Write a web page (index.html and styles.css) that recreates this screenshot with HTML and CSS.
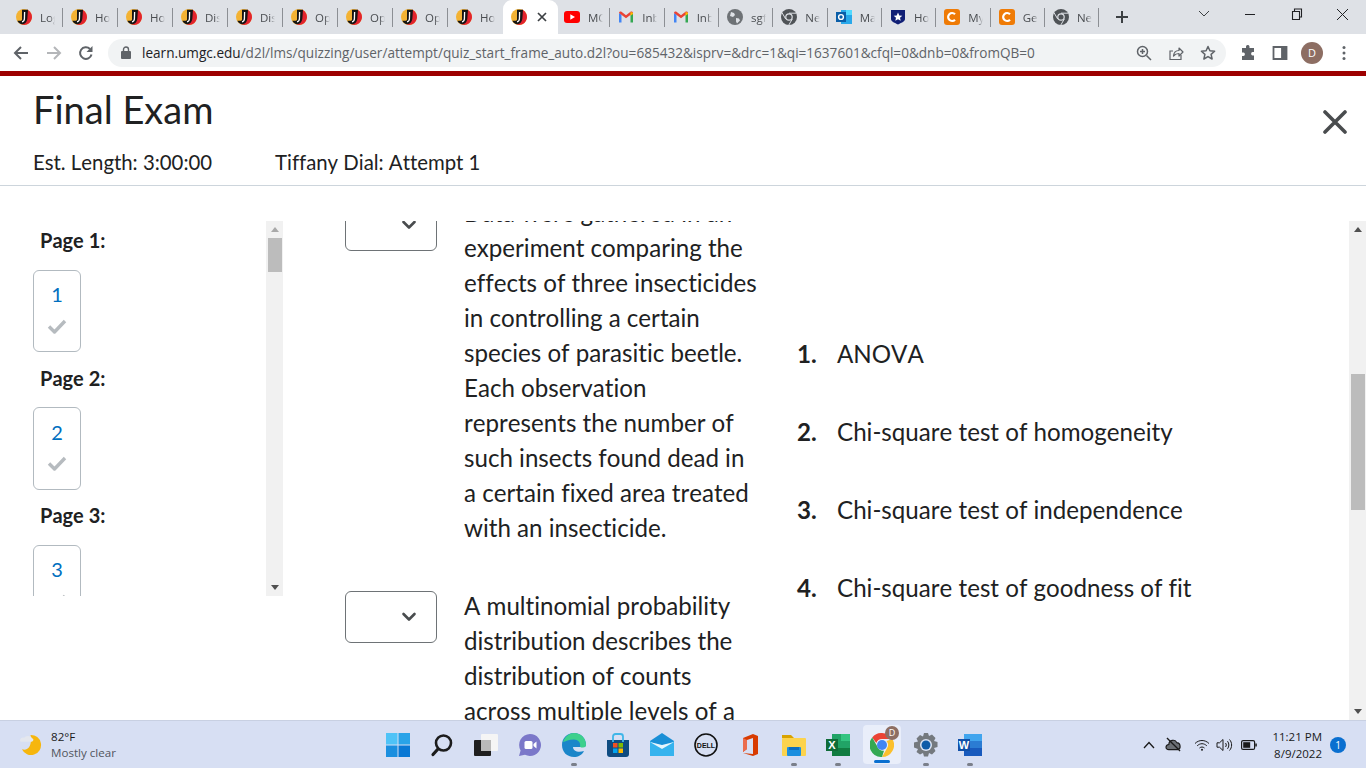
FILE: index.html
```html
<!DOCTYPE html>
<html lang="en">
<head>
<meta charset="utf-8">
<title>Final Exam</title>
<link rel="stylesheet" href="styles.css">
</head>
<body>
<svg class="defs" width="0" height="0" aria-hidden="true">
  <defs>
    <symbol id="umgc" viewBox="0 0 16 16">
      <circle cx="8" cy="8" r="8" fill="#f3b233"/>
      <path d="M11 .6A8 8 0 0 1 8 16L5 15l6-5z" fill="#e2232e"/>
      <path d="M6 .8h6L11.300 10c-.4 3-2.300 5.200-5 5.200-2 0-3.800-1.300-5-3.500H5c.6 0 1-.5 1-1.200z" fill="#151515"/>
      <path d="M8.600 3l-.2 7c-.1 1.500-.9 2.600-2.400 2.800" fill="none" stroke="#fff" stroke-width="1.300"/>
    </symbol>
    <symbol id="youtube" viewBox="0 0 16 16">
      <rect y="2" width="16" height="12" rx="3" fill="#f00"/>
      <path d="M6.300 5.200v5.600L11 8z" fill="#fff"/>
    </symbol>
    <symbol id="gmail" viewBox="0 0 16 16">
      <path d="M1 13.500V4l2.500 1.800v7.700z" fill="#4285f4"/>
      <path d="M12.500 13.500V5.800L15 4v9.500z" fill="#34a853"/>
      <path d="M1 4c0-1.500 1.500-2 2.500-1.200L8 6.200l4.500-3.400C13.500 2 15 2.500 15 4l-7 5.300z" fill="#ea4335"/>
      <path d="M12.500 2.800 15 4v1l-2.500 1.800z" fill="#fbbc04"/>
    </symbol>
    <symbol id="globe" viewBox="0 0 16 16">
      <circle cx="8" cy="8" r="8" fill="#6e7276"/>
      <path d="M4 3l3 1 1 2-2 2-3-1zM9 9l3 .5 1 2-3 3-1-2z" fill="#dee1e6"/>
    </symbol>
    <symbol id="chromegray" viewBox="0 0 16 16">
      <circle cx="8" cy="8" r="8" fill="#4f5357"/>
      <circle cx="8" cy="8" r="3.800" fill="#dee1e6"/>
      <circle cx="8" cy="8" r="2.600" fill="#4f5357"/>
      <path d="M8 4.200h7M4.700 10 1.200 4M11.300 10l-3.500 6" stroke="#dee1e6" stroke-width="1"/>
    </symbol>
    <symbol id="outlook" viewBox="0 0 16 16">
      <rect x="5" y="1" width="11" height="14" fill="#28a8ea"/>
      <rect x="10" y="1" width="6" height="5" fill="#50d9ff"/>
      <rect y="3" width="10" height="10" fill="#0a5ea8"/>
      <circle cx="5" cy="8" r="2.400" fill="none" stroke="#fff" stroke-width="1.400"/>
    </symbol>
    <symbol id="shield" viewBox="0 0 16 16">
      <path d="M1 1h14v9c0 2.500-4 4-7 5.500C5 14 1 12.500 1 10z" fill="#101f76"/>
      <path d="M8 3.500l1.300 2.900 3 .3-2.300 2 .7 3L8 10.200l-2.700 1.500.7-3-2.300-2 3-.3z" fill="#fff"/>
    </symbol>
    <symbol id="orangec" viewBox="0 0 16 16">
      <rect width="16" height="16" rx="3" fill="#ef7b06"/>
      <path d="M11 5.200A4 4 0 1 0 11 10.800" fill="none" stroke="#fff" stroke-width="2.200"/>
    </symbol>
    <symbol id="chevron" viewBox="0 0 16 10">
      <path d="M2.500 2 8 7.500 13.500 2" fill="none" stroke="#494c4e" stroke-width="2.600" stroke-linecap="round" stroke-linejoin="round"/>
    </symbol>
    <symbol id="check" viewBox="0 0 20 16">
      <path d="M2 8.500 7.500 14 18 3" fill="none" stroke="#b6bbbf" stroke-width="3.400" stroke-linejoin="round"/>
    </symbol>
  </defs>
</svg>

<header class="chrome">
  <div class="tabstrip">
    <div class="tabs">
      <div class="tab"><svg class="fav"><use href="#umgc"/></svg><span class="tab-title">Log</span></div>
      <div class="tab"><svg class="fav"><use href="#umgc"/></svg><span class="tab-title">Ho</span></div>
      <div class="tab"><svg class="fav"><use href="#umgc"/></svg><span class="tab-title">Ho</span></div>
      <div class="tab"><svg class="fav"><use href="#umgc"/></svg><span class="tab-title">Dis</span></div>
      <div class="tab"><svg class="fav"><use href="#umgc"/></svg><span class="tab-title">Dis</span></div>
      <div class="tab"><svg class="fav"><use href="#umgc"/></svg><span class="tab-title">Op</span></div>
      <div class="tab"><svg class="fav"><use href="#umgc"/></svg><span class="tab-title">Op</span></div>
      <div class="tab"><svg class="fav"><use href="#umgc"/></svg><span class="tab-title">Op</span></div>
      <div class="tab tab-before-active"><svg class="fav"><use href="#umgc"/></svg><span class="tab-title">Ho</span></div>
      <div class="tab tab-active"><svg class="fav"><use href="#umgc"/></svg>
        <svg class="tab-close" viewBox="0 0 10 10"><path d="M1 1l8 8M9 1 1 9" stroke="#3c4043" stroke-width="1.700"/></svg>
      </div>
    </div>
    <div class="tabs tabs-narrow">
      <div class="tab"><svg class="fav"><use href="#youtube"/></svg><span class="tab-title">MC</span></div>
      <div class="tab"><svg class="fav"><use href="#gmail"/></svg><span class="tab-title">Inb</span></div>
      <div class="tab"><svg class="fav"><use href="#gmail"/></svg><span class="tab-title">Inb</span></div>
      <div class="tab"><svg class="fav"><use href="#globe"/></svg><span class="tab-title">sgf</span></div>
      <div class="tab"><svg class="fav"><use href="#chromegray"/></svg><span class="tab-title">Ne</span></div>
      <div class="tab"><svg class="fav"><use href="#outlook"/></svg><span class="tab-title">Ma</span></div>
      <div class="tab"><svg class="fav"><use href="#shield"/></svg><span class="tab-title">Ho</span></div>
      <div class="tab"><svg class="fav"><use href="#orangec"/></svg><span class="tab-title">My</span></div>
      <div class="tab"><svg class="fav"><use href="#orangec"/></svg><span class="tab-title">Ge</span></div>
      <div class="tab"><svg class="fav"><use href="#chromegray"/></svg><span class="tab-title">Ne</span></div>
    </div>
    <svg class="newtab" viewBox="0 0 14 14"><path d="M7 1v12M1 7h12" stroke="#3c4043" stroke-width="2"/></svg>
    <div class="winctl">
      <svg class="winbtn" viewBox="0 0 46 20"><path d="M18 7l5 5 5-5" fill="none" stroke="#3c4043" stroke-width="1"/></svg>
      <svg class="winbtn" viewBox="0 0 46 20"><path d="M18 10.500h10" stroke="#202124" stroke-width="1"/></svg>
      <svg class="winbtn" viewBox="0 0 46 20"><path d="M19.500 7.500h7v8h-7zM21.500 7.500v-2.500h7v8h-2" fill="none" stroke="#202124" stroke-width="1.100"/></svg>
      <svg class="winbtn" viewBox="0 0 46 20"><path d="M18 5l11 11M29 5 18 16" stroke="#202124" stroke-width="1"/></svg>
    </div>
  </div>
  <div class="toolbar">
    <svg class="navicon nav-back" viewBox="0 0 16 16"><path d="M15 8H2M8 2 2 8l6 6" fill="none" stroke="#5f6368" stroke-width="2"/></svg>
    <svg class="navicon nav-forward" viewBox="0 0 16 16"><path d="M1 8h13M8 2l6 6-6 6" fill="none" stroke="#b4b6b9" stroke-width="2"/></svg>
    <svg class="navicon nav-reload" viewBox="0 0 16 16"><path d="M13.500 9.500A5.800 5.800 0 1 1 12 4" fill="none" stroke="#5f6368" stroke-width="2"/><path d="M14.500 1v6h-6z" fill="#5f6368"/></svg>
    <div class="omnibox">
      <svg class="lock" viewBox="0 0 10 13"><path d="M2.500 5.500V3.500a2.500 2.500 0 0 1 5 0v2" fill="none" stroke="#5f6368" stroke-width="1.400"/><rect y="5" width="10" height="8" rx="1" fill="#5f6368"/></svg>
      <span class="url"><span class="url-host">learn.umgc.edu</span>/d2l/lms/quizzing/user/attempt/quiz_start_frame_auto.d2l?ou=685432&amp;isprv=&amp;drc=1&amp;qi=1637601&amp;cfql=0&amp;dnb=0&amp;fromQB=0</span>
      <div class="omni-icons">
        <svg class="omni-icon" viewBox="0 0 16 16"><circle cx="6.500" cy="6.500" r="5" fill="none" stroke="#5f6368" stroke-width="1.500"/><path d="M10.500 10.500 15 15M4 6.500h5M6.500 4v5" stroke="#5f6368" stroke-width="1.500"/></svg>
        <svg class="omni-icon" viewBox="0 0 16 16"><path d="M13 10v4.500H2V6h3" fill="none" stroke="#5f6368" stroke-width="1.200"/><path d="M5.500 11c.3-3.500 2.500-5.500 5.500-5.500V3l4 4-4 4V8.500c-2.500 0-4 .8-5.500 2.500z" fill="none" stroke="#5f6368" stroke-width="1.200" stroke-linejoin="round"/></svg>
        <svg class="omni-icon" viewBox="0 0 16 16"><path d="M8 1.500l1.900 4.300 4.700.5-3.500 3.100 1 4.600L8 11.600l-4.100 2.400 1-4.600L1.400 6.300l4.700-.5z" fill="none" stroke="#5f6368" stroke-width="1.500" stroke-linejoin="round"/></svg>
      </div>
    </div>
    <div class="tool-icons">
      <svg class="tool-icon" viewBox="0 0 16 16"><path d="M6 1.500a1.800 1.800 0 0 1 3.500 0V3H14v4h-1.500a1.800 1.800 0 0 0 0 3.500H14v4.500H2v-4h1.500a1.800 1.800 0 0 0 0-3.500H2V3h4z" fill="#5f6368"/></svg>
      <svg class="tool-icon" viewBox="0 0 16 16"><path d="M1.500 2h13v12h-13zM10 2v12" fill="none" stroke="#5f6368" stroke-width="1.800"/><rect x="10" y="2" width="4.500" height="12" fill="#5f6368"/></svg>
      <div class="avatar">D</div>
      <svg class="tool-icon" viewBox="0 0 16 16"><circle cx="8" cy="2.500" r="1.500" fill="#5f6368"/><circle cx="8" cy="8" r="1.500" fill="#5f6368"/><circle cx="8" cy="13.500" r="1.500" fill="#5f6368"/></svg>
    </div>
  </div>
  <div class="brandline"></div>
</header>

<main class="dialog">
  <div class="dialog-head">
    <div class="title-row">
      <h1 class="title">Final Exam</h1>
      <svg class="dialog-close" viewBox="0 0 24 24"><path d="M2 2l20 20M22 2 2 22" stroke="#494c4e" stroke-width="3.600" stroke-linecap="round"/></svg>
    </div>
    <div class="meta"><span class="meta-length">Est. Length: 3:00:00</span><span>Tiffany Dial: Attempt 1</span></div>
  </div>

  <div class="dialog-body">
    <aside class="pages">
      <div class="pages-list">
        <h2 class="page-label">Page 1:</h2>
        <div class="page-tile"><span class="page-num">1</span><svg class="page-check"><use href="#check"/></svg></div>
        <h2 class="page-label">Page 2:</h2>
        <div class="page-tile"><span class="page-num">2</span><svg class="page-check"><use href="#check"/></svg></div>
        <h2 class="page-label">Page 3:</h2>
        <div class="page-tile"><span class="page-num">3</span><svg class="page-check"><use href="#check"/></svg></div>
      </div>
      <div class="scrollbar scrollbar-small">
        <svg class="sb-arrow" viewBox="0 0 8 5"><path d="M4 0l4 5H0z" fill="#a9a9a9"/></svg>
        <div class="sb-track"><div class="sb-thumb sb-thumb-small"></div></div>
        <svg class="sb-arrow" viewBox="0 0 8 5"><path d="M0 0h8L4 5z" fill="#505050"/></svg>
      </div>
    </aside>

    <section class="questions">
      <div class="match">
        <div class="match-left">
          <div class="match-row">
            <div class="select"><svg class="select-chev"><use href="#chevron"/></svg></div>
            <p class="prompt">Data were gathered in an experiment comparing the effects of three insecticides in controlling a certain species of parasitic beetle. Each observation represents the number of such insects found dead in a certain fixed area treated with an insecticide.</p>
          </div>
          <div class="match-row">
            <div class="select"><svg class="select-chev"><use href="#chevron"/></svg></div>
            <p class="prompt">A multinomial probability distribution describes the distribution of counts across multiple levels of a</p>
          </div>
        </div>
        <ol class="answers">
          <li class="answer"><span class="answer-num">1.</span>ANOVA</li>
          <li class="answer"><span class="answer-num">2.</span>Chi-square test of homogeneity</li>
          <li class="answer"><span class="answer-num">3.</span>Chi-square test of independence</li>
          <li class="answer"><span class="answer-num">4.</span>Chi-square test of goodness of fit</li>
        </ol>
      </div>
      <div class="scrollbar scrollbar-main">
        <svg class="sb-arrow" viewBox="0 0 8 5"><path d="M4 0l4 5H0z" fill="#505050"/></svg>
        <div class="sb-track"><div class="sb-thumb sb-thumb-main"></div></div>
        <svg class="sb-arrow" viewBox="0 0 8 5"><path d="M0 0h8L4 5z" fill="#505050"/></svg>
      </div>
    </section>
  </div>
</main>

<footer class="taskbar">
  <div class="weather">
    <svg class="weather-icon" viewBox="0 0 24 24">
      <path d="M11 2a10.500 10.500 0 1 1-9 15c6 2 11-3 9-15z" fill="#f6b60d"/>
      <path d="M0 8c0-3 3-4 4.500-3 1-2.500 7-3 8 .5 2 0 2 3.500-.5 3.500H2C.5 9 0 8.500 0 8z" fill="#e4e7ee"/>
    </svg>
    <div class="weather-text"><span class="temp">82°F</span><span class="cond">Mostly clear</span></div>
  </div>
  <div class="task-icons">
    <div class="task"><svg class="task-svg" viewBox="0 0 24 24"><rect width="11.500" height="11.500" fill="#4fc3f7"/><rect x="12.500" width="11.500" height="11.500" fill="#29a3e8"/><rect y="12.500" width="11.500" height="11.500" fill="#1b8fdf"/><rect x="12.500" y="12.500" width="11.500" height="11.500" fill="#0a78d4"/></svg></div>
    <div class="task"><svg class="task-svg" viewBox="0 0 24 24"><circle cx="13.500" cy="10" r="7.500" fill="none" stroke="#1c1c1c" stroke-width="2.600"/><path d="M8 16l-5 5.500" stroke="#1c1c1c" stroke-width="3.200" stroke-linecap="round"/></svg></div>
    <div class="task"><svg class="task-svg" viewBox="0 0 24 24"><rect x="7" y="1" width="17" height="17" rx="1" fill="#f5f5f5"/><rect x="0" y="7" width="17" height="16" rx="1" fill="#1f1f1f"/><rect x="7" y="7" width="10" height="11" fill="#b9b9b9"/></svg></div>
    <div class="task"><svg class="task-svg" viewBox="0 0 24 24"><path d="M12 1a11 11 0 1 1-5 20.800L1 23l1.600-5.500A11 11 0 0 1 12 1z" fill="#7b78c9"/><rect x="6.500" y="8" width="8" height="8" rx="1.500" fill="#fff"/><path d="M15.500 11l3-2.500v7l-3-2.500z" fill="#fff"/></svg></div>
    <div class="task task-running"><svg class="task-svg" viewBox="0 0 24 24"><path d="M12 0C19 0 24 5 24 12c0 1-1 2-3 2H11c0 4 5 6 11 4-2 4-6 6-10 6C5 24 0 19 0 12S5 0 12 0z" fill="#1b86c9"/><path d="M1 9C3 3 8 0 12 0c7 0 12 5 12 12 0 1.500-1 2.500-3 2.500-1 0-3 0-3-1 1-4-2-7-6-7-5 0-9 2-11 2.500z" fill="#3dd08c"/></svg></div>
    <div class="task"><svg class="task-svg" viewBox="0 0 24 24"><path d="M1 7h22v14a3 3 0 0 1-3 3H4a3 3 0 0 1-3-3z" fill="#0f4c81"/><path d="M7 9V3.500C7 2 8 1 9.500 1h5C16 1 17 2 17 3.500V9" fill="none" stroke="#3fb6e8" stroke-width="1.800"/><rect x="7" y="10" width="4.500" height="4.500" fill="#f25022"/><rect x="12.500" y="10" width="4.500" height="4.500" fill="#7fba00"/><rect x="7" y="15.500" width="4.500" height="4.500" fill="#00a4ef"/><rect x="12.500" y="15.500" width="4.500" height="4.500" fill="#ffb900"/></svg></div>
    <div class="task"><svg class="task-svg" viewBox="0 0 24 24"><path d="M0 8 12 0l12 8v15H0z" fill="#1a8fd6"/><path d="M0 8l12 8 12-8v15H0z" fill="#35b3ee"/><path d="M0 9l12 7 12-7-12 3z" fill="#e8f6fd"/></svg></div>
    <div class="task"><svg class="task-svg" viewBox="0 0 24 24"><circle cx="12" cy="12" r="11" fill="none" stroke="#111" stroke-width="1.600"/><text class="dell-text" x="12" y="14.500" text-anchor="middle">DELL</text></svg></div>
    <div class="task"><svg class="task-svg" viewBox="0 0 24 24"><path d="M5 5 15 1l5 2v18l-5 2-10-3 10 1V5L9 7v9l-4 3z" fill="#d83b01"/><path d="M5 5 9 7v9l-4 3z" fill="#eb6c4d"/></svg></div>
    <div class="task task-running"><svg class="task-svg" viewBox="0 0 24 24"><path d="M0 2h9l3 3h-12z" fill="#d9a300"/><rect y="5" width="24" height="18" rx="1" fill="#fcd34d"/><rect x="5" y="14" width="14" height="9" rx="1" fill="#1b8fdf"/><rect x="7" y="14" width="10" height="3" fill="#0c6fbf"/></svg></div>
    <div class="task task-running"><svg class="task-svg" viewBox="0 0 24 24"><rect x="6" y="1" width="18" height="22" fill="#21a366"/><rect x="15" y="1" width="9" height="7" fill="#33c481"/><rect x="6" y="15" width="18" height="8" fill="#107c41"/><rect y="6" width="12" height="12" fill="#0f6c38"/><text class="office-letter" x="6" y="16" text-anchor="middle">X</text></svg></div>
    <div class="task task-active">
      <svg class="task-svg" viewBox="0 0 24 24"><path d="M12 0a12 12 0 0 1 10.400 6H12a6 6 0 0 0-5.700 4L2.200 4.500A12 12 0 0 1 12 0z" fill="#ea4335"/><path d="M22.400 6A12 12 0 0 1 12 24l5-8.800A6 6 0 0 0 16.500 8z" fill="#fbc02d"/><path d="M12 24A12 12 0 0 1 2.200 4.500l5 8.700A6 6 0 0 0 14 17.700z" fill="#34a853"/><circle cx="12" cy="12" r="5" fill="#4285f4"/></svg>
      <span class="task-badge">D</span>
    </div>
    <div class="task task-running"><svg class="task-svg" viewBox="0 0 24 24"><path d="M10 0h4l1 3 3-1.500 3.500 3.500-1.500 3 3.500 1v5l-3.500 1 1.500 3-3.500 3.500-3-1.500-1 3.500h-4l-1-3.500-3 1.500L2.500 19l1.500-3L0 14.500v-5l4-1-1.500-3L6 2l3 1.500z" fill="#74797e"/><circle cx="12" cy="12" r="6" fill="#dce4f4"/><circle cx="12" cy="12" r="4.500" fill="#0f5ca8"/></svg></div>
    <div class="task task-running"><svg class="task-svg" viewBox="0 0 24 24"><rect x="6" y="1" width="18" height="22" fill="#2b7cd3"/><rect x="6" y="1" width="18" height="7" fill="#41a5ee"/><rect x="6" y="15" width="18" height="8" fill="#185abd"/><rect y="6" width="12" height="12" fill="#1150a8"/><text class="office-letter" x="6" y="16" text-anchor="middle">W</text></svg></div>
  </div>
  <div class="tray">
    <svg class="tray-up" viewBox="0 0 12 8"><path d="M1 7l5-5.500L11 7" fill="none" stroke="#1a1a1a" stroke-width="1.300"/></svg>
    <svg class="tray-cloud" viewBox="0 0 18 16"><path d="M4 13.500c-4 0-4-5 0-5.500 0-5 7-6 8.500-2 4 0 5 6.500 1 7.500z" fill="#6b6f75" stroke="#1a1a1a" stroke-width="1.200"/><path d="M2 1l14 14" stroke="#1a1a1a" stroke-width="1.400"/></svg>
    <svg class="tray-wifi" viewBox="0 0 16 12"><path d="M1 4.500c4-4 10-4 14 0M3.200 6.800c3-2.800 6.600-2.800 9.600 0M5.500 9c1.500-1.300 3.500-1.300 5 0" fill="none" stroke="#1a1a1a" stroke-width="1"/><circle cx="8" cy="10.800" r="1" fill="#1a1a1a"/></svg>
    <svg class="tray-sound" viewBox="0 0 17 14"><path d="M1 4.800h2.500L7 1.500v11L3.500 9.200H1z" fill="none" stroke="#1a1a1a" stroke-width="1"/><path d="M9.500 5c1 1.200 1 2.800 0 4M11.500 3.200c1.800 2 1.800 5.600 0 7.600M13.500 1.500c2.800 3 2.800 8 0 11" fill="none" stroke="#1a1a1a" stroke-width="1"/></svg>
    <svg class="tray-batt" viewBox="0 0 16 10"><rect x=".6" y=".6" width="13" height="8.800" rx="1.500" fill="none" stroke="#1a1a1a" stroke-width="1.200"/><rect x="2.200" y="2.200" width="7" height="5.600" fill="#1a1a1a"/><rect x="14.300" y="3.500" width="1.500" height="3" fill="#1a1a1a"/></svg>
    <div class="clock"><span>11:21 PM</span><span>8/9/2022</span></div>
    <span class="notif">1</span>
  </div>
</footer>
</body>
</html>
```

FILE: styles.css
```css
* { box-sizing: border-box; }
html, body { margin: 0; padding: 0; }
body {
  width: 1366px;
  height: 768px;
  overflow: hidden;
  display: flex;
  flex-direction: column;
  background: #fff;
  color: #202122;
  font-family: "Lato", sans-serif;
  font-variant-ligatures: none;
  font-kerning: none;
}
.defs { position: absolute; }

/* Browser chrome */
.chrome { flex: none; }
.tabstrip {
  height: 34px;
  background: #dee1e6;
  display: flex;
  align-items: stretch;
  padding-left: 8px;
  position: relative;
}
.tabs { display: flex; }
.tabs-narrow { margin-left: -2px; }
.tab {
  width: 55px;
  position: relative;
  display: flex;
  align-items: center;
  padding-left: 8px;
  gap: 8px;
}
.tabs-narrow .tab { width: 54.33px; }
.tab::after {
  content: "";
  position: absolute;
  right: 0;
  top: 8px;
  height: 19px;
  width: 1px;
  background: #8c8f94;
}
.tab-before-active::after, .tab-active::after { display: none; }
.tab-active {
  background: #fff;
  border-radius: 9px 9px 0 0;
  gap: 10px;
  padding-left: 8px;
}
.fav { width: 16px; height: 16px; flex: none; }
.tab-title {
  width: 15px;
  overflow: hidden;
  white-space: nowrap;
  font: 11.500px "Open Sans", sans-serif;
  color: #4a4d51;
  -webkit-mask-image: linear-gradient(to right, #000 65%, transparent);
  mask-image: linear-gradient(to right, #000 65%, transparent);
}
.tab-close { width: 10px; height: 10px; flex: none; }
.newtab { width: 14px; height: 14px; margin: 10px 0 0 16px; flex: none; }
.winctl { display: flex; margin-left: 52px; height: 20px; margin-top: 4px; }
.winbtn { width: 46px; height: 20px; flex: none; }

.toolbar {
  height: 37px;
  background: #fff;
  display: flex;
  align-items: center;
  padding-left: 13px;
}
.navicon { width: 16px; height: 16px; flex: none; }
.nav-forward { margin-left: 17px; }
.nav-reload { margin-left: 16px; }
.omnibox {
  width: 1118px;
  height: 28px;
  margin-left: 14px;
  background: #f1f3f4;
  border-radius: 14px;
  display: flex;
  align-items: center;
  padding-left: 13px;
}
.lock { width: 10px; height: 13px; flex: none; }
.url {
  margin-left: 11px;
  margin-bottom: 1px;
  font: 13.590px "Open Sans", sans-serif;
  color: #5f6368;
  white-space: nowrap;
}
.url-host { color: #202124; }
.omni-icons {
  margin-left: auto;
  display: flex;
  gap: 16px;
  padding-right: 10px;
}
.omni-icon { width: 16px; height: 16px; flex: none; }
.tool-icons {
  display: flex;
  align-items: center;
  margin-left: 14px;
  gap: 16px;
}
.tool-icon { width: 16px; height: 16px; flex: none; }
.avatar {
  width: 22px;
  height: 22px;
  border-radius: 50%;
  background: #8d6e63;
  color: #fff;
  font: 11px "Open Sans", sans-serif;
  display: flex;
  align-items: center;
  justify-content: center;
  margin: 0 -3px;
}
.brandline { height: 5px; background: #9d0000; }

/* Dialog */
.dialog {
  flex: 1;
  min-height: 0;
  display: flex;
  flex-direction: column;
  overflow: hidden;
}
.dialog-head {
  flex: none;
  height: 110px;
  border-bottom: 1px solid #cdd5dc;
  padding: 8px 0 0 33px;
}
.title-row { display: flex; justify-content: space-between; height: 50px; }
.title {
  margin: 0;
  font-size: 38px;
  line-height: 50px;
  font-weight: 400;
  color: #202122;
}
.dialog-close { width: 24px; height: 24px; margin: 26px 19px 0 0; flex: none; }
.meta {
  margin-top: 16px;
  font-size: 20.350px;
  line-height: 24px;
  color: #202122;
  display: flex;
}
.meta-length { width: 242px; }

.dialog-body {
  flex: 1;
  min-height: 0;
  display: flex;
  align-items: flex-start;
  padding-top: 35px;
}
.pages {
  flex: none;
  width: 283px;
  height: 375px;
  display: flex;
  overflow: hidden;
}
.pages-list { flex: 1; padding: 5px 0 0 33px; }
.page-label {
  margin: 0 0 15.500px 7px;
  font-size: 20px;
  line-height: 28px;
  font-weight: 700;
  color: #202122;
}
.page-tile {
  width: 48px;
  height: 82.500px;
  border: 1px solid #b2bac0;
  border-radius: 6px;
  display: flex;
  flex-direction: column;
  align-items: center;
  padding-top: 10.500px;
  margin-bottom: 11.500px;
  background: #fff;
}
.page-num { font-size: 20px; line-height: 27px; color: #006fbf; }
.page-check { width: 20px; height: 16px; margin-top: 9.500px; flex: none; }

.scrollbar {
  flex: none;
  width: 17px;
  background: #f1f1f1;
  display: flex;
  flex-direction: column;
  align-items: center;
}
.sb-arrow { width: 8px; height: 5px; margin: 6px 0; flex: none; }
.sb-track { flex: 1; width: 100%; padding: 0 1.500px 0 2px; }
.sb-thumb { background: #bcbcbc; width: 100%; }
.sb-thumb-small { height: 34px; }
.sb-thumb-main { height: 136px; margin-top: 136px; }

.questions {
  flex: 1;
  min-width: 0;
  height: 499px;
  display: flex;
  overflow: hidden;
}
.match {
  flex: 1;
  min-width: 0;
  display: flex;
  padding-left: 62px;
  overflow: hidden;
}
.match-left { width: 415px; flex: none; margin-top: -24.600px; }
.match-row { display: flex; gap: 27px; margin-bottom: 42.800px; }
.select {
  flex: none;
  width: 92px;
  height: 52px;
  margin-top: 2.100px;
  border: 1px solid #6e7376;
  border-radius: 6px;
  background: #fff;
  display: flex;
  align-items: center;
  justify-content: flex-end;
  padding-right: 19px;
}
.select-chev { width: 16px; height: 10px; }
.prompt {
  margin: 0;
  width: 296px;
  font-size: 24.150px;
  line-height: 34.950px;
  color: #202122;
}
.answers {
  list-style: none;
  margin: 111px 0 0 37px;
  padding: 0;
}
.answer {
  font-size: 24.150px;
  line-height: 44px;
  margin-bottom: 34px;
  white-space: nowrap;
  display: flex;
}
.answer-num { width: 40px; font-weight: 700; flex: none; }

/* Taskbar */
.taskbar {
  flex: none;
  height: 48px;
  background: #d7dff3;
  border-top: 1px solid #c8d0e2;
  display: flex;
  align-items: center;
}
.weather {
  width: 376px;
  flex: none;
  display: flex;
  align-items: center;
  padding-left: 20px;
  gap: 8px;
}
.weather-icon { width: 23px; height: 23px; flex: none; }
.weather-text {
  display: flex;
  flex-direction: column;
  font: 11.600px/16px "Open Sans", sans-serif;
}
.temp { color: #1a1a1a; }
.cond { color: #51555c; }
.task-icons { display: flex; align-items: center; height: 100%; }
.task {
  width: 44px;
  height: 100%;
  display: flex;
  align-items: center;
  justify-content: center;
  position: relative;
}
.task-svg { width: 24px; height: 24px; flex: none; }
.task-running::after {
  content: "";
  position: absolute;
  bottom: 2px;
  left: 19px;
  width: 6px;
  height: 3px;
  border-radius: 2px;
  background: #7a7f8a;
}
.task-active::before {
  content: "";
  position: absolute;
  inset: 4px 3px 4px 3px;
  background: #e9eefa;
  border-radius: 4px;
}
.task-active .task-svg { position: relative; }
.task-active::after {
  content: "";
  position: absolute;
  bottom: 5px;
  left: 14px;
  width: 16px;
  height: 3px;
  border-radius: 2px;
  background: #0a6fd0;
}
.task-badge {
  position: absolute;
  top: 5px;
  right: 5px;
  width: 14px;
  height: 14px;
  border-radius: 50%;
  background: #8d6e63;
  color: #fff;
  font: 9px/14px "Open Sans", sans-serif;
  text-align: center;
}
.dell-text { font: 700 7px "Liberation Sans", sans-serif; fill: #111; }
.office-letter { font: 700 11px "Liberation Sans", sans-serif; fill: #fff; }
.tray {
  margin-left: auto;
  display: flex;
  align-items: center;
  padding-right: 20px;
}
.tray-up { width: 12px; height: 8px; flex: none; }
.tray-cloud { width: 17px; height: 15px; margin-left: 10px; flex: none; }
.tray-wifi { width: 16px; height: 12px; margin-left: 12px; flex: none; }
.tray-sound { width: 17px; height: 14px; margin-left: 6px; flex: none; }
.tray-batt { width: 16px; height: 10px; margin-left: 8px; flex: none; }
.clock {
  display: flex;
  flex-direction: column;
  align-items: flex-end;
  margin-left: 15px;
  font: 11.500px/17px "Open Sans", sans-serif;
  color: #1a1a1a;
}
.notif {
  width: 16px;
  height: 16px;
  margin-left: 8px;
  border-radius: 50%;
  background: #0a6fd0;
  color: #fff;
  font: 10px/16px "Open Sans", sans-serif;
  text-align: center;
  flex: none;
}
```
